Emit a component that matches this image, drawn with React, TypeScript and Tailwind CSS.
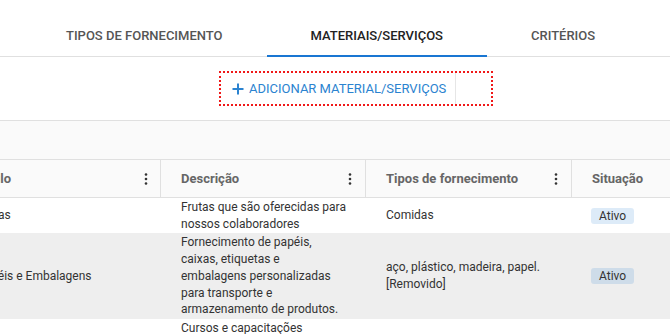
import React from "react";

function Kebab() {
  return (
    <svg width="4" height="12" viewBox="0 0 4 12" className="shrink-0">
      <circle cx="2" cy="1.5" r="1.3" fill="#333" />
      <circle cx="2" cy="6" r="1.3" fill="#333" />
      <circle cx="2" cy="10.5" r="1.3" fill="#333" />
    </svg>
  );
}

function Badge({ label }: { label: string }) {
  return (
    <span className="inline-block h-[16px] leading-[16px] px-[8px] rounded-[3px] bg-[rgba(25,118,210,0.15)] text-[#333] text-[12px]">
      {label}
    </span>
  );
}

const rows = [
  {
    title: "Frutas",
    desc: "Frutas que são oferecidas para nossos colaboradores",
    tipos: "Comidas",
    bg: "bg-white",
  },
  {
    title: "Papéis e Embalagens",
    desc: "Fornecimento de papéis, caixas, etiquetas e embalagens personalizadas para transporte e armazenamento de produtos.",
    tipos: "aço, plástico, madeira, papel. [Removido]",
    bg: "bg-[#eeeeee]",
  },
  {
    title: "Treinamentos",
    desc: "Cursos e capacitações profissionais para equipes internas.",
    tipos: "Serviços",
    bg: "bg-white",
  },
];

export default function App() {
  return (
    <div className="w-[670px] h-[334px] overflow-hidden bg-white font-['Roboto',sans-serif] text-[#333]">
      {/* Tabs */}
      <div className="h-[57px] border-b border-[#e0e0e0] flex pl-[22px]">
        <div className="h-[56px] px-[44px] pt-[27px] leading-[17px] text-[13px] font-medium text-[#555] whitespace-nowrap">
          TIPOS DE FORNECIMENTO
        </div>
        <div className="relative h-[56px] px-[44px] pt-[27px] leading-[17px] text-[13px] font-medium text-[#222] whitespace-nowrap">
          MATERIAIS/SERVIÇOS
          <div className="absolute left-0 right-0 bottom-[-1px] h-[2px] bg-[#1976d2]" />
        </div>
        <div className="h-[56px] px-[44px] pt-[27px] leading-[17px] text-[13px] font-medium text-[#555] whitespace-nowrap">
          CRITÉRIOS
        </div>
      </div>

      {/* Action area */}
      <div className="h-[63px] pt-[14px] pl-[219px]">
        <div className="w-[274px] h-[35px] border-2 border-dotted border-[#f01818] flex">
          <button className="h-full flex items-center pl-[11px] pr-[9px] gap-[5px] border-r border-[#e6e6e6] text-[#2b83d0] text-[13px] whitespace-nowrap">
            <svg width="12" height="12" viewBox="0 0 12 12">
              <path d="M6 0.5V11.5M0.5 6H11.5" stroke="#2b83d0" strokeWidth="2" />
            </svg>
            ADICIONAR MATERIAL/SERVIÇOS
          </button>
        </div>
      </div>

      {/* Toolbar */}
      <div className="h-[40px] border-t border-b border-[#e0e0e0] bg-[#fafafa]" />

      {/* Table */}
      <div className="-ml-[43px] w-[800px]">
        <div className="flex h-[38px] border-b border-[#e0e0e0] bg-[#fafafa] text-[13px] font-bold text-[#666]">
          <div className="w-[204px] shrink-0 border-r border-[#e0e0e0] flex items-center justify-between pl-[20px] pr-[12px]">
            <span>Título</span>
            <Kebab />
          </div>
          <div className="w-[205px] shrink-0 border-r border-[#e0e0e0] flex items-center justify-between pl-[20px] pr-[13px]">
            <span>Descrição</span>
            <Kebab />
          </div>
          <div className="w-[206px] shrink-0 border-r border-[#e0e0e0] flex items-center justify-between pl-[20px] pr-[13px]">
            <span>Tipos de fornecimento</span>
            <Kebab />
          </div>
          <div className="w-[185px] shrink-0 flex items-center justify-between pl-[20px] pr-[13px]">
            <span>Situação</span>
            <Kebab />
          </div>
        </div>
        {rows.map((r) => (
          <div key={r.title} className={`flex py-px text-[12px] leading-[16.7px] text-[#333] ${r.bg}`}>
            <div className="w-[204px] shrink-0 flex items-center pl-[20px] pr-[12px]">{r.title}</div>
            <div className="w-[205px] shrink-0 flex items-center pl-[20px] pr-[18px]">{r.desc}</div>
            <div className="w-[206px] shrink-0 flex items-center pl-[20px] pr-[18px]">{r.tipos}</div>
            <div className="w-[185px] shrink-0 flex items-center pl-[19px]">
              <Badge label="Ativo" />
            </div>
          </div>
        ))}
      </div>
    </div>
  );
}
